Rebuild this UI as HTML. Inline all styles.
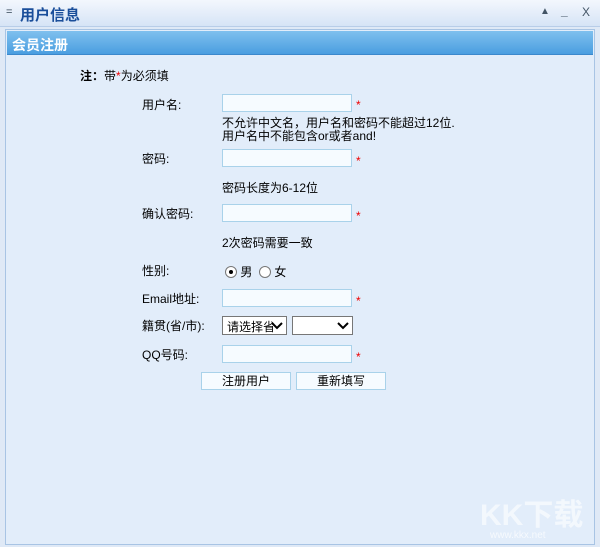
<!DOCTYPE html><html><head><meta charset="utf-8"><style>
*{margin:0;padding:0;box-sizing:border-box}
body{width:600px;height:547px;overflow:hidden;background:#dfe9f6;font:12px "Liberation Sans","Noto Sans CJK SC",sans-serif;color:#000;position:relative}
.top{position:absolute;left:0;top:0;width:600px;height:27px;background:linear-gradient(#f3f7fd,#d6e4f6);border-bottom:1px solid #b8cde8}
.ttl{position:absolute;left:20px;top:4px;font-size:15px;font-weight:bold;color:#1a4e9a}
.panel{position:absolute;left:5px;top:29px;width:590px;height:516px;background:#e2edfa;border:1px solid #a8c4e4}
.hdr{position:absolute;left:1px;top:1px;right:1px;height:24px;background:linear-gradient(#7fc0ee,#4a9ee0);border-bottom:1px solid #3b88cc;color:#fff;font-size:14px;font-weight:bold;padding:4px 0 0 5px}
.a{position:absolute;white-space:nowrap}
.in{position:absolute;left:222px;width:130px;height:18px;background:#f6fbff;border:1px solid #a9d2ea}
.st{position:absolute;left:356px;color:#e00;font-size:12px}
.r{display:inline-block;width:12px;height:12px;border:1px solid #777;border-radius:50%;background:#fff;vertical-align:-2px;position:relative}
.sel{position:absolute;top:316px;height:19px;background:#fff;border:1px solid #777;font-size:12px;padding:1px 4px;overflow:hidden}
.sel svg{position:absolute;right:3px;top:5px}
.btn{position:absolute;top:372px;height:18px;background:#f6fbff;border:1px solid #a9d2ea;text-align:center;line-height:16px}
</style></head><body>
<div class="top"><span class="a" style="left:6px;top:6px;color:#345;font-size:11px">=</span><span class="ttl">用户信息</span>
<span class="a" style="left:540px;top:6px;color:#456;font-size:10px">▲</span><span class="a" style="left:561px;top:4px;color:#345;font-weight:bold">_</span><span class="a" style="left:582px;top:5px;color:#456;font-size:12px">X</span></div>
<div class="panel"><div class="hdr">会员注册</div></div>
<div class="a" style="left:80px;top:67px"><b>注：</b>带<span style="color:#e00">*</span>为必须填</div>
<div class="a" style="left:142px;top:96px">用户名:</div>
<div class="in" style="top:94px"></div><div class="st" style="top:98px">*</div>
<div class="a" style="left:222px;top:117px;line-height:13px">不允许中文名，用户名和密码不能超过12位.<br>用户名中不能包含or或者and!</div>
<div class="a" style="left:142px;top:150px">密码:</div>
<div class="in" style="top:149px"></div><div class="st" style="top:154px">*</div>
<div class="a" style="left:222px;top:179px">密码长度为6-12位</div>
<div class="a" style="left:142px;top:205px">确认密码:</div>
<div class="in" style="top:204px"></div><div class="st" style="top:209px">*</div>
<div class="a" style="left:222px;top:234px">2次密码需要一致</div>
<div class="a" style="left:142px;top:262px">性别:</div>
<div class="a" style="left:225px;top:263px"><span class="r"><span style="position:absolute;left:3px;top:3px;width:4px;height:4px;background:#000;border-radius:50%"></span></span> 男 &nbsp;<span class="r"></span> 女</div>
<div class="a" style="left:142px;top:290px">Email地址:</div>
<div class="in" style="top:289px"></div><div class="st" style="top:294px">*</div>
<div class="a" style="left:142px;top:317px">籍贯(省/市):</div>
<div class="sel" style="left:222px;width:65px">请选择省<svg width="12" height="8"><path d="M1 1L6 6L11 1" stroke="#000" stroke-width="2" fill="none"/></svg></div>
<div class="sel" style="left:292px;width:61px"><svg width="12" height="8"><path d="M1 1L6 6L11 1" stroke="#000" stroke-width="2" fill="none"/></svg></div>
<div class="a" style="left:142px;top:346px">QQ号码:</div>
<div class="in" style="top:345px"></div><div class="st" style="top:350px">*</div>
<div class="btn" style="left:201px;width:90px">注册用户</div>
<div class="btn" style="left:296px;width:90px">重新填写</div>
<div class="a" style="left:480px;top:490px;font-size:30px;font-weight:bold;color:rgba(255,255,255,.6)">KK下载</div>
<div class="a" style="left:490px;top:530px;font-size:10px;color:rgba(255,255,255,.7)">www.kkx.net</div>
</body></html>
